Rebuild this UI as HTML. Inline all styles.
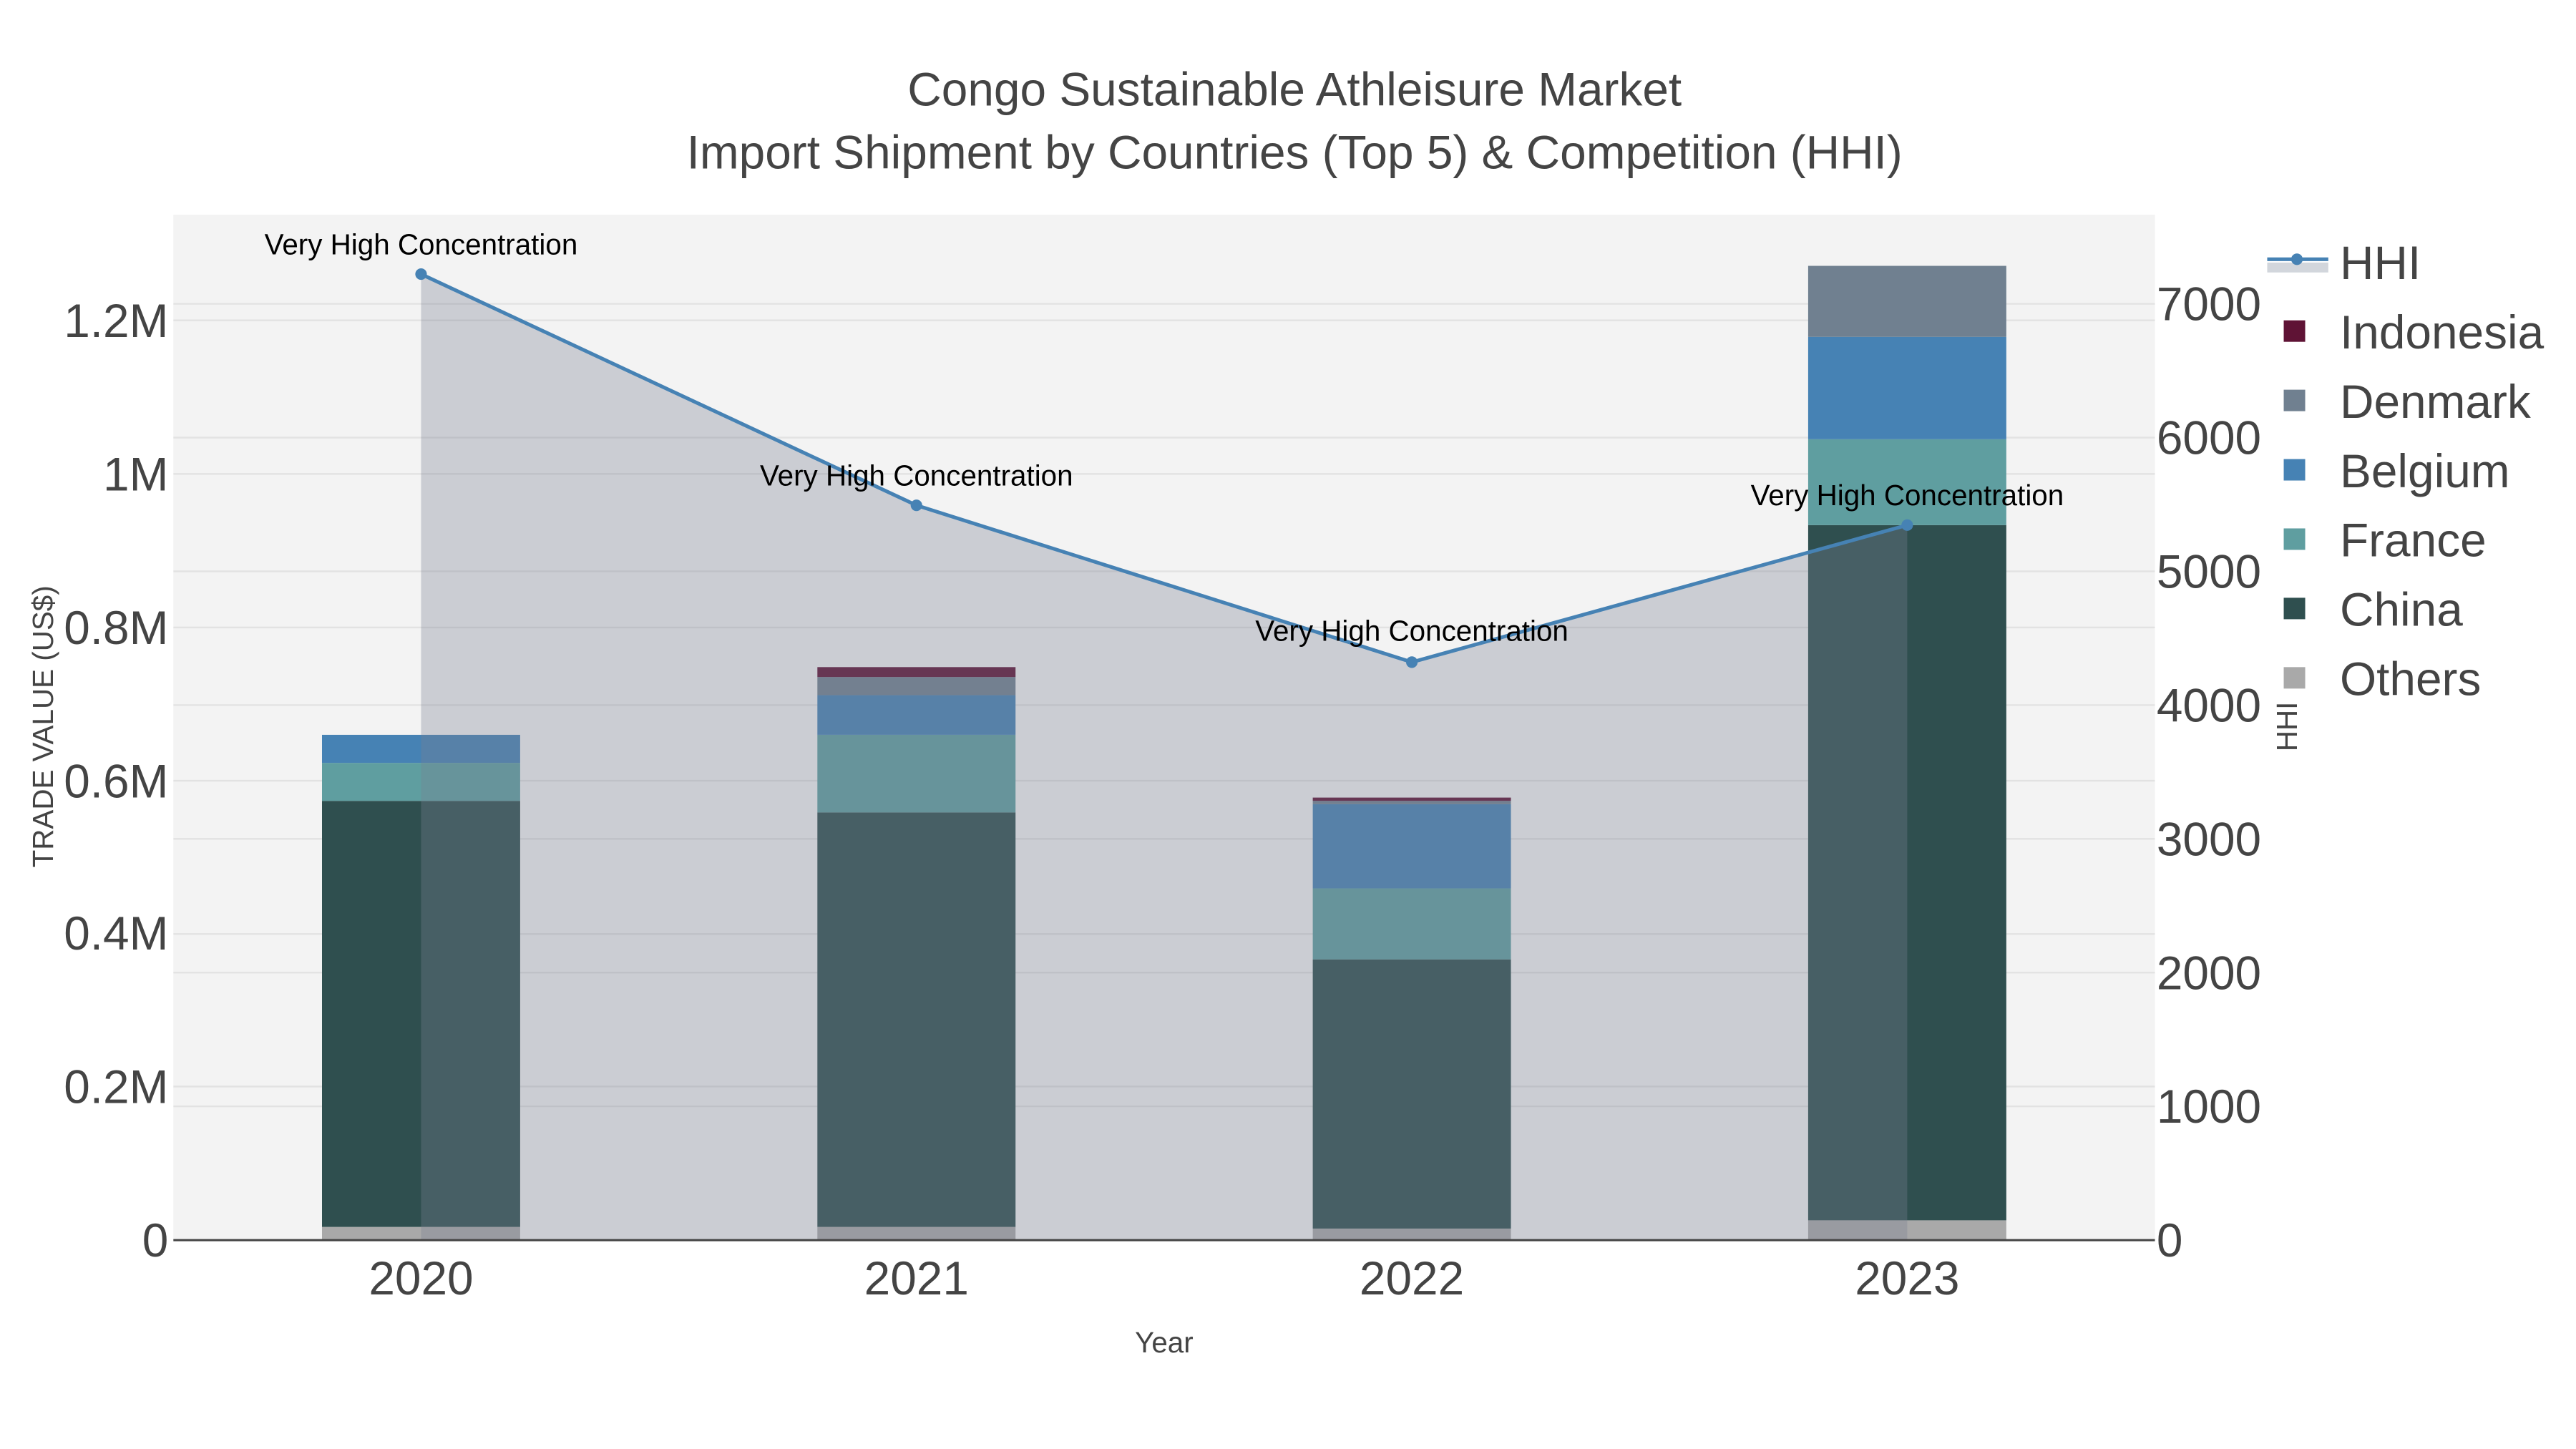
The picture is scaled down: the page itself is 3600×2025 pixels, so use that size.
<!DOCTYPE html>
<html><head><meta charset="utf-8"><style>
html,body{margin:0;padding:0;background:#fff;}
svg{display:block;}
text{font-family:"Liberation Sans",Arial,sans-serif;}
</style></head><body>
<svg width="3600" height="2025" viewBox="0 0 1560 877.5" xmlns="http://www.w3.org/2000/svg">
<rect x="0" y="0" width="1560" height="877.5" fill="#fff"/>
<rect x="105" y="130" width="1200" height="621" fill="#f3f3f3"/>
<g stroke="#e2e2e2" stroke-width="1">
<line x1="105" x2="1305" y1="658" y2="658"/><line x1="105" x2="1305" y1="565.6" y2="565.6"/>
<line x1="105" x2="1305" y1="472.8" y2="472.8"/><line x1="105" x2="1305" y1="380" y2="380"/>
<line x1="105" x2="1305" y1="287" y2="287"/><line x1="105" x2="1305" y1="194" y2="194"/>
<line x1="105" x2="1305" y1="670" y2="670"/><line x1="105" x2="1305" y1="589" y2="589"/>
<line x1="105" x2="1305" y1="508" y2="508"/><line x1="105" x2="1305" y1="427" y2="427"/>
<line x1="105" x2="1305" y1="346" y2="346"/><line x1="105" x2="1305" y1="265" y2="265"/>
<line x1="105" x2="1305" y1="184" y2="184"/>
</g>
<g>
<rect x="195" y="743" width="120" height="8" fill="#a9a9a9"/>
<rect x="195" y="485" width="120" height="258" fill="#2f4f4f"/>
<rect x="195" y="462" width="120" height="23" fill="#5f9ea0"/>
<rect x="195" y="445" width="120" height="17" fill="#4682b4"/>

<rect x="495" y="743" width="120" height="8" fill="#a9a9a9"/>
<rect x="495" y="492" width="120" height="251" fill="#2f4f4f"/>
<rect x="495" y="445" width="120" height="47" fill="#5f9ea0"/>
<rect x="495" y="421" width="120" height="24" fill="#4682b4"/>
<rect x="495" y="410" width="120" height="11" fill="#708090"/>
<rect x="495" y="404" width="120" height="6" fill="#5f1335"/>

<rect x="795" y="744" width="120" height="7" fill="#a9a9a9"/>
<rect x="795" y="581" width="120" height="163" fill="#2f4f4f"/>
<rect x="795" y="538" width="120" height="43" fill="#5f9ea0"/>
<rect x="795" y="487" width="120" height="51" fill="#4682b4"/>
<rect x="795" y="485" width="120" height="2" fill="#708090"/>
<rect x="795" y="483" width="120" height="2" fill="#5f1335"/>

<rect x="1095" y="739" width="120" height="12" fill="#a9a9a9"/>
<rect x="1095" y="318" width="120" height="421" fill="#2f4f4f"/>
<rect x="1095" y="266" width="120" height="52" fill="#5f9ea0"/>
<rect x="1095" y="204" width="120" height="62" fill="#4682b4"/>
<rect x="1095" y="161" width="120" height="43" fill="#708090"/>
</g>
<polygon points="255,751 255,166 555,306 855,401 1155,318 1155,751" fill="rgb(120,128,145)" fill-opacity="0.33"/>
<polyline points="255,166 555,306 855,401 1155,318" fill="none" stroke="#4682b4" stroke-width="2.2"/>
<g fill="#4682b4"><circle cx="255" cy="166" r="3.5"/><circle cx="555" cy="306" r="3.5"/><circle cx="855" cy="401" r="3.5"/><circle cx="1155" cy="318" r="3.5"/></g>
<line x1="105" x2="1305" y1="751" y2="751" stroke="#444" stroke-width="1.3"/>
<g font-size="17.5" fill="#000" text-anchor="middle">
<text x="255" y="154">Very High Concentration</text>
<text x="555" y="294">Very High Concentration</text>
<text x="855" y="388">Very High Concentration</text>
<text x="1155" y="306">Very High Concentration</text>
</g>
<g font-size="28.5" fill="#444" text-anchor="middle">
<text x="784" y="64">Congo Sustainable Athleisure Market</text>
<text x="784" y="102">Import Shipment by Countries (Top 5) &amp; Competition (HHI)</text>
</g>
<g font-size="28.5" fill="#444" text-anchor="end">
<text x="102" y="761">0</text><text x="102" y="668">0.2M</text><text x="102" y="575">0.4M</text>
<text x="102" y="483">0.6M</text><text x="102" y="390">0.8M</text><text x="102" y="297">1M</text><text x="102" y="204">1.2M</text>
</g>
<g font-size="28.5" fill="#444" text-anchor="start">
<text x="1306" y="761">0</text><text x="1306" y="680">1000</text><text x="1306" y="599">2000</text>
<text x="1306" y="518">3000</text><text x="1306" y="437">4000</text><text x="1306" y="356">5000</text>
<text x="1306" y="275">6000</text><text x="1306" y="194">7000</text>
</g>
<g font-size="28.5" fill="#444" text-anchor="middle">
<text x="255" y="784">2020</text><text x="555" y="784">2021</text><text x="855" y="784">2022</text><text x="1155" y="784">2023</text>
</g>
<text x="705" y="819" font-size="17.5" fill="#444" text-anchor="middle">Year</text>
<text transform="translate(32,440) rotate(-90)" font-size="17.5" fill="#444" text-anchor="middle">TRADE VALUE (US$)</text>
<text transform="translate(1391,440) rotate(-90)" font-size="17.5" fill="#444" text-anchor="middle">HHI</text>
<rect x="1373" y="159" width="37" height="6" fill="#d2d6dc"/>
<line x1="1373" x2="1410" y1="157" y2="157" stroke="#4682b4" stroke-width="2.2"/>
<circle cx="1391" cy="157" r="3.5" fill="#4682b4"/>
<g font-size="28.5" fill="#444">
<text x="1417" y="169">HHI</text>
<text x="1417" y="211">Indonesia</text>
<text x="1417" y="253">Denmark</text>
<text x="1417" y="295">Belgium</text>
<text x="1417" y="337">France</text>
<text x="1417" y="379">China</text>
<text x="1417" y="421">Others</text>
</g>
<rect x="1383" y="194" width="13" height="13" fill="#5f1335"/>
<rect x="1383" y="236" width="13" height="13" fill="#708090"/>
<rect x="1383" y="278" width="13" height="13" fill="#4682b4"/>
<rect x="1383" y="320" width="13" height="13" fill="#5f9ea0"/>
<rect x="1383" y="362" width="13" height="13" fill="#2f4f4f"/>
<rect x="1383" y="404" width="13" height="13" fill="#a9a9a9"/>
</svg>
</body></html>
